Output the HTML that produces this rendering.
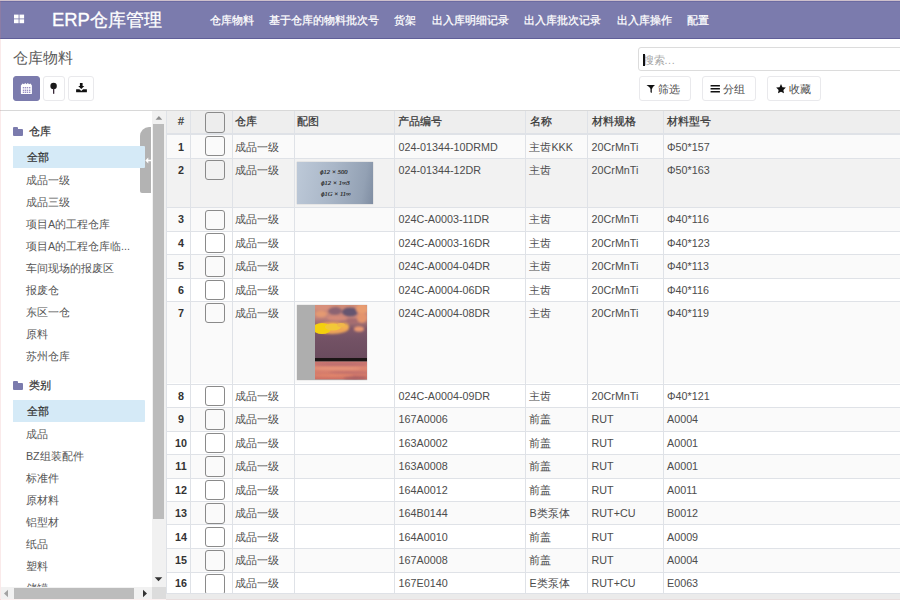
<!DOCTYPE html>
<html><head><meta charset="utf-8">
<style>
*{box-sizing:border-box}
html,body{margin:0;padding:0;width:900px;height:600px;overflow:hidden;background:#fff;font-family:"Liberation Sans",sans-serif;}
body{position:relative}
.abs{position:absolute}
#topline{position:absolute;left:0;top:0;width:900px;height:1px;background:#cdc0cc;z-index:20}
#leftline{position:absolute;left:0;top:1px;width:1px;height:599px;background:rgba(225,130,130,0.17);z-index:20}
#botline{position:absolute;left:0;top:599px;width:900px;height:1px;background:rgba(225,130,130,0.12);z-index:20}
#nav{position:absolute;left:0;top:1px;width:900px;height:38px;background:#7b7bad;border-top:1px solid #6c6ba2;border-bottom:1px solid #5f5e98}
.grid{position:absolute;left:13.8px;top:12.7px;width:10.5px;height:8.6px}
.grid i{position:absolute;width:4.9px;height:3.9px;background:#fff}
.brand{position:absolute;left:52px;top:7.2px;font-size:18.45px;line-height:22px;color:#fff;white-space:nowrap;-webkit-text-stroke:0.3px #fff}
.mi{position:absolute;top:12.8px;font-size:10.75px;line-height:14px;color:#fff;white-space:nowrap;-webkit-text-stroke:0.25px #fff}
.title{position:absolute;left:12.8px;top:47.5px;font-size:14.75px;line-height:20px;color:#5c5c5c;white-space:nowrap}
.vbtn{position:absolute;top:76.25px;height:24.75px;border:1px solid #e9e9ec;border-radius:3px;background:#fff}
.vbtn.act{background:#7b7bad;border-color:#7b7bad}
.search{position:absolute;left:638px;top:47px;width:300px;height:24.3px;border:1px solid #dcdcdc;border-radius:3px;background:#fff}
.caret{position:absolute;left:643px;top:53.6px;width:2.1px;height:12.4px;background:#111;z-index:3}
.ph{position:absolute;left:642.5px;top:53.1px;font-size:10.75px;line-height:14px;color:#a5a5a5;white-space:nowrap}
.fbtn{position:absolute;top:76.3px;height:24.4px;border:1px solid #e9e9ec;border-radius:3px;background:#fff}
.ftxt{position:absolute;top:81.5px;font-size:10.75px;line-height:14px;color:#4c4c4c;white-space:nowrap}
#sep{position:absolute;left:0;top:109.5px;width:900px;height:1.3px;background:#d8d8d8}
/* sidebar */
.fold{position:absolute;left:13.3px;margin-top:0.5px;width:10px;height:7.3px;background:#7b7bad;border-radius:0 1px 1px 1px}
.fold:before{content:"";position:absolute;left:0;top:-1.5px;width:4.5px;height:2px;background:#7b7bad;border-radius:1px 1px 0 0}
.shdr{position:absolute;left:28.6px;font-size:10.75px;line-height:14px;color:#333;font-weight:normal;-webkit-text-stroke:0.22px #333;white-space:nowrap;margin-top:-1.3px}
.ssel{position:absolute;left:13.3px;width:131.6px;background:#d5eaf7;border-radius:0 1px 1px 0}
.sitem{position:absolute;left:25.9px;margin-top:-0.5px;font-size:10.75px;line-height:14px;color:#555;white-space:nowrap}
.sitem.b{color:#333;-webkit-text-stroke:0.22px #333;margin-left:0.7px}
.tab{position:absolute;left:140.3px;top:126.9px;width:11px;height:66.5px;background:#b3b3b3;border-radius:9px 0 0 2px}
.tabarrow{position:absolute;left:145px;top:157.5px;width:7px;height:7px}
.vscroll{position:absolute;left:152.3px;top:110.5px;width:13.4px;height:477px;background:#f1f1f1}
.vthumb{position:absolute;left:153.3px;top:124.3px;width:11px;height:394.5px;background:#bcbcbc}
.hscroll{position:absolute;left:1px;top:587.2px;width:151.3px;height:12px;background:#f1f1f1}
.hthumb{position:absolute;left:14px;top:588.2px;width:120px;height:11px;background:#bcbcbc}
.corner{position:absolute;left:152.3px;top:587.2px;width:13.4px;height:12px;background:#dcdcdc}
/* table */
#tbl{position:absolute;left:166px;top:110.5px;width:734px;height:489px;overflow:hidden}
.thead{position:absolute;left:166px;top:110.5px;width:734px;height:23px;background:#eeeeee}
.row{position:absolute;left:166px;width:734px;border-top:1px solid #dfe2e7}
.vl{position:absolute;top:110.5px;width:1.2px;height:489px;background:#dfe2e7}
.hl{position:absolute;left:166px;width:734px;height:1.4px;background:#dfe2e7}
.th{position:absolute;top:114.3px;font-size:10.75px;line-height:14px;color:#333;-webkit-text-stroke:0.22px #333;white-space:nowrap}
.num{position:absolute;left:171px;width:20px;text-align:center;font-size:10.75px;line-height:14px;color:#333;font-weight:bold}
.cb{position:absolute;left:204.6px;width:20.5px;height:20.45px;border:1.4px solid #8a8a8a;border-radius:3px;background:transparent}
.cell{position:absolute;font-size:10.75px;line-height:14px;color:#4c4c4c;white-space:nowrap}
.img1{position:absolute;left:297px;top:161.7px;width:75.5px;height:42px;background:linear-gradient(100deg,#bdc9d8 0%,#aab7c8 45%,#93a1b4 85%,#7f8da2 100%);overflow:hidden;box-shadow:0 0 1px rgba(0,0,0,.3)}
.img1 span{position:absolute;font-family:"Liberation Serif",serif;font-style:italic;font-size:6.5px;line-height:7px;color:#222;white-space:nowrap;-webkit-text-stroke:0.15px #222}
.img2{position:absolute;left:297px;top:305.3px;width:70px;height:74.4px;background:#aeaeae;overflow:hidden;box-shadow:0 0 1px rgba(0,0,0,.3)}
.sun{position:absolute;left:18px;top:0;width:52px;height:74.4px;
background:
 linear-gradient(180deg,rgba(0,0,0,0) 0%,rgba(0,0,0,0) 72%,#2a1a1e 72%,#2a1a1e 76%,rgba(0,0,0,0) 76%),
 radial-gradient(ellipse 20px 7px at 15px 28px,#f2c230 0%,#eeb43a 60%,rgba(238,160,80,0) 100%),
 radial-gradient(ellipse 14px 6px at 36px 12px,#5e4f66 0%,rgba(94,79,102,0) 100%),
 linear-gradient(180deg,#c98a7e 0%,#b87a78 20%,#8a5f6c 40%,#6e5262 60%,#6b4e5e 71%,#3a2830 72%,#c2706a 78%,#d9807a 88%,#c86c68 100%);}
</style></head><body>
<div id="topline"></div>
<div id="nav">
  <svg style="position:absolute;left:12px;top:12px" width="14" height="12" viewBox="0 0 14 12"><g fill="#fff"><rect x="2" y="0.6" width="4.6" height="3.9"/><rect x="7.5" y="0.6" width="4.6" height="3.9"/><rect x="2" y="5.3" width="4.6" height="3.9"/><rect x="7.5" y="5.3" width="4.6" height="3.9"/></g></svg>
  <div class="brand">ERP仓库管理</div>
</div>
<div id="menu" style="position:absolute;left:0;top:0">
<div class="mi" style="left:209.6px">仓库物料</div>
<div class="mi" style="left:269.4px">基于仓库的物料批次号</div>
<div class="mi" style="left:393.9px">货架</div>
<div class="mi" style="left:432.0px">出入库明细记录</div>
<div class="mi" style="left:524.3px">出入库批次记录</div>
<div class="mi" style="left:616.6px">出入库操作</div>
<div class="mi" style="left:686.9px">配置</div>
</div>
<div id="leftline"></div>
<div class="title">仓库物料</div>
<div class="vbtn act" style="left:13.1px;width:26.9px"></div>
<svg class="abs" style="left:20px;top:82px" width="13" height="13" viewBox="0 0 13 13">
  <path d="M0.9 3.6 L2.6 1.4 L4.0 2.2 L5.3 1.0 L6.5 2.2 L7.8 1.0 L9.1 2.2 L10.5 1.4 L11.9 3.6 L11.9 11.8 Q11.9 12.1 11.6 12.1 L1.2 12.1 Q0.9 12.1 0.9 11.8 Z" fill="#fff"/>
  <g fill="#9a90c2"><rect x="2.80" y="5.00" width="1.4" height="1.4"/><rect x="4.80" y="5.00" width="1.4" height="1.4"/><rect x="6.80" y="5.00" width="1.4" height="1.4"/><rect x="9.00" y="5.00" width="1.4" height="1.4"/><rect x="2.80" y="7.60" width="1.4" height="1.4"/><rect x="4.80" y="7.60" width="1.4" height="1.4"/><rect x="6.80" y="7.60" width="1.4" height="1.4"/><rect x="9.00" y="7.60" width="1.4" height="1.4"/><rect x="2.80" y="9.60" width="1.4" height="1.4"/><rect x="4.80" y="9.60" width="1.4" height="1.4"/><rect x="6.80" y="9.60" width="1.4" height="1.4"/><rect x="9.00" y="9.60" width="1.4" height="1.4"/></g>
</svg>
<div class="vbtn" style="left:42.5px;width:22.3px"></div>
<svg class="abs" style="left:49px;top:82px" width="9" height="13" viewBox="0 0 9 13">
  <circle cx="4.6" cy="4.0" r="3.2" fill="#1a1a1a"/>
  <rect x="4.0" y="6.5" width="1.3" height="5.3" fill="#3a2a3a"/>
</svg>
<div class="vbtn" style="left:68.2px;width:25.6px"></div>
<svg class="abs" style="left:75px;top:82px" width="13" height="12" viewBox="0 0 13 12">
  <path d="M4.9 1.0 H7.6 V4.0 H9.3 L6.25 6.9 L3.2 4.0 H4.9 Z" fill="#111"/>
  <path d="M1.3 7.2 H4.4 L6.25 9.0 L8.1 7.2 H11.6 Q11.9 7.2 11.9 7.6 V9.9 Q11.9 10.3 11.5 10.3 H1.5 Q1.1 10.3 1.1 9.9 V7.6 Q1.1 7.2 1.3 7.2 Z" fill="#111"/>
</svg>
<div class="search"></div>
<div class="caret"></div>
<div class="ph">搜索<span style="letter-spacing:0.62px">...</span></div>
<div class="fbtn" style="left:638.5px;width:52px"></div>
<svg class="abs" style="left:646px;top:84px" width="10" height="10" viewBox="0 0 10 10">
  <path d="M0.5 1 L9 1 Q6 3.4 5.8 5.2 L5.8 9 L4.5 8.2 L4.5 5.2 Q4.3 3.4 0.5 1 Z" fill="#111"/>
</svg>
<div class="ftxt" style="left:657.6px">筛选</div>
<div class="fbtn" style="left:702.2px;width:53.5px"></div>
<svg class="abs" style="left:710px;top:84px" width="11" height="9" viewBox="0 0 11 9">
  <rect x="0.5" y="0.9" width="9.5" height="1.5" rx="0.5" fill="#111"/><rect x="0.5" y="3.95" width="9.5" height="1.5" rx="0.5" fill="#111"/><rect x="0.5" y="7.0" width="9.5" height="1.5" rx="0.5" fill="#111"/>
</svg>
<div class="ftxt" style="left:723.2px">分组</div>
<div class="fbtn" style="left:767.3px;width:53.4px"></div>
<svg class="abs" style="left:775.5px;top:83.5px" width="10" height="10" viewBox="0 0 10 10">
  <path d="M5.00 0.10 L6.47 3.18 L9.85 3.62 L7.38 5.97 L8.00 9.33 L5.00 7.70 L2.00 9.33 L2.62 5.97 L0.15 3.62 L3.53 3.18Z" fill="#111"/>
</svg>
<div class="ftxt" style="left:788.6px">收藏</div>
<div id="sep"></div>

<!-- table -->
<div class="thead"></div>
<div class="row" style="top:133.5px;height:24.80000000000001px;background:#fafafa"></div>
<div class="num" style="top:139.70000000000002px">1</div>
<div class="cb" style="top:135.8px"></div>
<div class="cell" style="left:235.3px;top:139.70000000000002px">成品一级</div>
<div class="cell" style="left:398.6px;top:139.70000000000002px">024-01344-10DRMD</div>
<div class="cell" style="left:529.4px;top:139.70000000000002px">主齿KKK</div>
<div class="cell" style="left:591.6px;top:139.70000000000002px">20CrMnTi</div>
<div class="cell" style="left:667px;top:139.70000000000002px">Φ50*157</div>
<div class="row" style="top:158.3px;height:48.89999999999998px;background:#f2f2f2"></div>
<div class="num" style="top:163.10000000000002px">2</div>
<div class="cb" style="top:159.60000000000002px"></div>
<div class="cell" style="left:235.3px;top:163.10000000000002px">成品一级</div>
<div class="cell" style="left:398.6px;top:163.10000000000002px">024-01344-12DR</div>
<div class="cell" style="left:529.4px;top:163.10000000000002px">主齿</div>
<div class="cell" style="left:591.6px;top:163.10000000000002px">20CrMnTi</div>
<div class="cell" style="left:667px;top:163.10000000000002px">Φ50*163</div>
<div class="img1"><span style="top:6.5px;left:23px">ɸ12 × 500</span><span style="top:17.5px;left:24px">ɸ12 × 1∞3</span><span style="top:28.5px;left:24px">ɸ1G × 11∞</span></div>
<div class="row" style="top:207.2px;height:23.400000000000006px;background:#fafafa"></div>
<div class="num" style="top:212.2px">3</div>
<div class="cb" style="top:209.5px"></div>
<div class="cell" style="left:235.3px;top:212.2px">成品一级</div>
<div class="cell" style="left:398.6px;top:212.2px">024C-A0003-11DR</div>
<div class="cell" style="left:529.4px;top:212.2px">主齿</div>
<div class="cell" style="left:591.6px;top:212.2px">20CrMnTi</div>
<div class="cell" style="left:667px;top:212.2px">Φ40*116</div>
<div class="row" style="top:230.6px;height:23.400000000000006px;background:#ffffff"></div>
<div class="num" style="top:235.6px">4</div>
<div class="cb" style="top:232.9px"></div>
<div class="cell" style="left:235.3px;top:235.6px">成品一级</div>
<div class="cell" style="left:398.6px;top:235.6px">024C-A0003-16DR</div>
<div class="cell" style="left:529.4px;top:235.6px">主齿</div>
<div class="cell" style="left:591.6px;top:235.6px">20CrMnTi</div>
<div class="cell" style="left:667px;top:235.6px">Φ40*123</div>
<div class="row" style="top:254.0px;height:23.5px;background:#fafafa"></div>
<div class="num" style="top:259.05px">5</div>
<div class="cb" style="top:256.3px"></div>
<div class="cell" style="left:235.3px;top:259.05px">成品一级</div>
<div class="cell" style="left:398.6px;top:259.05px">024C-A0004-04DR</div>
<div class="cell" style="left:529.4px;top:259.05px">主齿</div>
<div class="cell" style="left:591.6px;top:259.05px">20CrMnTi</div>
<div class="cell" style="left:667px;top:259.05px">Φ40*113</div>
<div class="row" style="top:277.5px;height:23.80000000000001px;background:#ffffff"></div>
<div class="num" style="top:282.7px">6</div>
<div class="cb" style="top:279.8px"></div>
<div class="cell" style="left:235.3px;top:282.7px">成品一级</div>
<div class="cell" style="left:398.6px;top:282.7px">024C-A0004-06DR</div>
<div class="cell" style="left:529.4px;top:282.7px">主齿</div>
<div class="cell" style="left:591.6px;top:282.7px">20CrMnTi</div>
<div class="cell" style="left:667px;top:282.7px">Φ40*116</div>
<div class="row" style="top:301.3px;height:82.19999999999999px;background:#fafafa"></div>
<div class="num" style="top:306.1px">7</div>
<div class="cb" style="top:302.6px"></div>
<div class="cell" style="left:235.3px;top:306.1px">成品一级</div>
<div class="cell" style="left:398.6px;top:306.1px">024C-A0004-08DR</div>
<div class="cell" style="left:529.4px;top:306.1px">主齿</div>
<div class="cell" style="left:591.6px;top:306.1px">20CrMnTi</div>
<div class="cell" style="left:667px;top:306.1px">Φ40*119</div>
<div class="img2"><svg style="position:absolute;left:18px;top:0" width="52" height="74.4" viewBox="0 0 52 74.4">
<defs><filter id="bl" x="-30%" y="-30%" width="160%" height="160%"><feGaussianBlur stdDeviation="0.9"/></filter>
<filter id="bl2" x="-30%" y="-30%" width="160%" height="160%"><feGaussianBlur stdDeviation="0.5"/></filter>
<linearGradient id="sky" x1="0" y1="0" x2="0" y2="1">
<stop offset="0" stop-color="#d28c76"/><stop offset="0.22" stop-color="#c4847a"/><stop offset="0.42" stop-color="#80596a"/><stop offset="0.6" stop-color="#735265"/><stop offset="1" stop-color="#6a4b5d"/></linearGradient>
<linearGradient id="sea" x1="0" y1="0" x2="0" y2="1">
<stop offset="0" stop-color="#c87470"/><stop offset="0.35" stop-color="#dc8672"/><stop offset="1" stop-color="#cc7064"/></linearGradient>
</defs>
<rect x="0" y="0" width="52" height="56" fill="url(#sky)"/>
<g filter="url(#bl)">
<ellipse cx="8" cy="2" rx="12" ry="3" fill="#d8907c"/>
<ellipse cx="6" cy="9" rx="6" ry="3.2" fill="#e49a72"/>
<ellipse cx="20" cy="6" rx="7" ry="4" fill="#8c6472"/>
<ellipse cx="35" cy="7" rx="8" ry="4.5" fill="#655470"/>
<ellipse cx="47" cy="4" rx="6" ry="5" fill="#e89c70"/>
<ellipse cx="47" cy="13" rx="5" ry="5" fill="#e4946c"/>
<ellipse cx="22" cy="13" rx="10" ry="2.6" fill="#d48a78"/>
<ellipse cx="37" cy="16" rx="6" ry="2.5" fill="#a56c70"/>
<ellipse cx="17" cy="23" rx="17" ry="6" fill="#eea458"/>
<ellipse cx="29" cy="21" rx="5" ry="3" fill="#f0b050"/>
<ellipse cx="44" cy="24" rx="5" ry="2.8" fill="#eb9a72"/>
</g>
<g filter="url(#bl2)">
<ellipse cx="7" cy="23.5" rx="9" ry="5.5" fill="#f4d010"/>
<ellipse cx="18" cy="22" rx="8" ry="3.5" fill="#f2c838"/>
<ellipse cx="26" cy="20" rx="4" ry="2" fill="#f0b848"/>
</g>
<rect x="0" y="53.0" width="52" height="3.6" fill="#1e1418" filter="url(#bl2)"/>
<rect x="0" y="56.6" width="52" height="17.8" fill="url(#sea)"/>
<g filter="url(#bl)" opacity="0.85">
<ellipse cx="26" cy="59.5" rx="26" ry="1.0" fill="#b06670"/>
<ellipse cx="22" cy="63.5" rx="24" ry="1.3" fill="#e8987c"/>
<ellipse cx="34" cy="67.5" rx="20" ry="1.1" fill="#b86a6c"/>
<ellipse cx="18" cy="70.5" rx="20" ry="1.4" fill="#e4886c"/>
<ellipse cx="40" cy="73" rx="12" ry="1.5" fill="#9c5a64"/>
</g>
</svg></div>
<div class="row" style="top:383.5px;height:23.5px;background:#ffffff"></div>
<div class="num" style="top:388.55px">8</div>
<div class="cb" style="top:385.8px"></div>
<div class="cell" style="left:235.3px;top:388.55px">成品一级</div>
<div class="cell" style="left:398.6px;top:388.55px">024C-A0004-09DR</div>
<div class="cell" style="left:529.4px;top:388.55px">主齿</div>
<div class="cell" style="left:591.6px;top:388.55px">20CrMnTi</div>
<div class="cell" style="left:667px;top:388.55px">Φ40*121</div>
<div class="row" style="top:407.0px;height:23.600000000000023px;background:#fafafa"></div>
<div class="num" style="top:412.1px">9</div>
<div class="cb" style="top:409.3px"></div>
<div class="cell" style="left:235.3px;top:412.1px">成品一级</div>
<div class="cell" style="left:398.6px;top:412.1px">167A0006</div>
<div class="cell" style="left:529.4px;top:412.1px">前盖</div>
<div class="cell" style="left:591.6px;top:412.1px">RUT</div>
<div class="cell" style="left:667px;top:412.1px">A0004</div>
<div class="row" style="top:430.6px;height:23.399999999999977px;background:#ffffff"></div>
<div class="num" style="top:435.6px">10</div>
<div class="cb" style="top:432.90000000000003px"></div>
<div class="cell" style="left:235.3px;top:435.6px">成品一级</div>
<div class="cell" style="left:398.6px;top:435.6px">163A0002</div>
<div class="cell" style="left:529.4px;top:435.6px">前盖</div>
<div class="cell" style="left:591.6px;top:435.6px">RUT</div>
<div class="cell" style="left:667px;top:435.6px">A0001</div>
<div class="row" style="top:454.0px;height:23.5px;background:#fafafa"></div>
<div class="num" style="top:459.05px">11</div>
<div class="cb" style="top:456.3px"></div>
<div class="cell" style="left:235.3px;top:459.05px">成品一级</div>
<div class="cell" style="left:398.6px;top:459.05px">163A0008</div>
<div class="cell" style="left:529.4px;top:459.05px">前盖</div>
<div class="cell" style="left:591.6px;top:459.05px">RUT</div>
<div class="cell" style="left:667px;top:459.05px">A0001</div>
<div class="row" style="top:477.5px;height:23.399999999999977px;background:#ffffff"></div>
<div class="num" style="top:482.5px">12</div>
<div class="cb" style="top:479.8px"></div>
<div class="cell" style="left:235.3px;top:482.5px">成品一级</div>
<div class="cell" style="left:398.6px;top:482.5px">164A0012</div>
<div class="cell" style="left:529.4px;top:482.5px">前盖</div>
<div class="cell" style="left:591.6px;top:482.5px">RUT</div>
<div class="cell" style="left:667px;top:482.5px">A0011</div>
<div class="row" style="top:500.9px;height:23.5px;background:#fafafa"></div>
<div class="num" style="top:505.94999999999993px">13</div>
<div class="cb" style="top:503.2px"></div>
<div class="cell" style="left:235.3px;top:505.94999999999993px">成品一级</div>
<div class="cell" style="left:398.6px;top:505.94999999999993px">164B0144</div>
<div class="cell" style="left:529.4px;top:505.94999999999993px">B类泵体</div>
<div class="cell" style="left:591.6px;top:505.94999999999993px">RUT+CU</div>
<div class="cell" style="left:667px;top:505.94999999999993px">B0012</div>
<div class="row" style="top:524.4px;height:23.700000000000045px;background:#ffffff"></div>
<div class="num" style="top:529.55px">14</div>
<div class="cb" style="top:526.6999999999999px"></div>
<div class="cell" style="left:235.3px;top:529.55px">成品一级</div>
<div class="cell" style="left:398.6px;top:529.55px">164A0010</div>
<div class="cell" style="left:529.4px;top:529.55px">前盖</div>
<div class="cell" style="left:591.6px;top:529.55px">RUT</div>
<div class="cell" style="left:667px;top:529.55px">A0009</div>
<div class="row" style="top:548.1px;height:23.699999999999932px;background:#fafafa"></div>
<div class="num" style="top:553.25px">15</div>
<div class="cb" style="top:550.4px"></div>
<div class="cell" style="left:235.3px;top:553.25px">成品一级</div>
<div class="cell" style="left:398.6px;top:553.25px">167A0008</div>
<div class="cell" style="left:529.4px;top:553.25px">前盖</div>
<div class="cell" style="left:591.6px;top:553.25px">RUT</div>
<div class="cell" style="left:667px;top:553.25px">A0004</div>
<div class="row" style="top:571.8px;height:21.600000000000023px;background:#ffffff"></div>
<div class="num" style="top:575.9px">16</div>
<div class="cb" style="top:574.0999999999999px"></div>
<div class="cell" style="left:235.3px;top:575.9px">成品一级</div>
<div class="cell" style="left:398.6px;top:575.9px">167E0140</div>
<div class="cell" style="left:529.4px;top:575.9px">E类泵体</div>
<div class="cell" style="left:591.6px;top:575.9px">RUT+CU</div>
<div class="cell" style="left:667px;top:575.9px">E0063</div>
<div class="row" style="top:593.4px;height:23.600000000000023px;background:#ebebeb;z-index:2"></div>
<div class="vl" style="left:165.5px"></div>
<div class="vl" style="left:190.3px"></div>
<div class="vl" style="left:231.5px"></div>
<div class="vl" style="left:293.5px"></div>
<div class="vl" style="left:394.0px"></div>
<div class="vl" style="left:524.7px"></div>
<div class="vl" style="left:587.1px"></div>
<div class="vl" style="left:663.2px"></div>
<div class="hl" style="top:132.8px"></div>
<div class="th" style="left:178px">#</div>
<div class="cb" style="left:204.6px;top:112.2px;background:#ededed"></div>
<div class="th" style="left:235.3px">仓库</div>
<div class="th" style="left:297.3px">配图</div>
<div class="th" style="left:398px">产品编号</div>
<div class="th" style="left:529.5px">名称</div>
<div class="th" style="left:591.5px">材料规格</div>
<div class="th" style="left:667px">材料型号</div>

<!-- sidebar -->
<div id="side" style="position:absolute;left:1px;top:110.5px;width:151.3px;height:476.7px;overflow:hidden;background:#fff"></div>
<div class="tab"></div>
<div class="fold" style="top:128px"></div><div class="shdr" style="top:125px">仓库</div>
<div class="ssel" style="top:146.2px;height:21.80000000000001px"></div><div class="sitem b" style="top:150.1px">全部</div>
<div class="sitem" style="top:173px">成品一级</div>
<div class="sitem" style="top:195px">成品三级</div>
<div class="sitem" style="top:217px">项目A的工程仓库</div>
<div class="sitem" style="top:239px">项目A的工程仓库临...</div>
<div class="sitem" style="top:261px">车间现场的报废区</div>
<div class="sitem" style="top:283px">报废仓</div>
<div class="sitem" style="top:305px">东区一仓</div>
<div class="sitem" style="top:327px">原料</div>
<div class="sitem" style="top:349px">苏州仓库</div>
<div class="fold" style="top:382px"></div><div class="shdr" style="top:379px">类别</div>
<div class="ssel" style="top:400.1px;height:21.899999999999977px"></div><div class="sitem b" style="top:404.05px">全部</div>
<div class="sitem" style="top:427px">成品</div>
<div class="sitem" style="top:449px">BZ组装配件</div>
<div class="sitem" style="top:471px">标准件</div>
<div class="sitem" style="top:493px">原材料</div>
<div class="sitem" style="top:515px">铝型材</div>
<div class="sitem" style="top:537px">纸品</div>
<div class="sitem" style="top:559px">塑料</div>
<div class="sitem" style="top:581px">储罐</div>
<svg class="abs" style="left:144.5px;top:157.3px" width="8" height="7" viewBox="0 0 8 7"><path d="M0.3 3.5l3-3v2.3h4.5v1.4h-4.5v2.3z" fill="#fff"/></svg>
<div class="vscroll"></div>
<div class="vthumb"></div>
<svg class="abs" style="left:154px;top:115px" width="9" height="6" viewBox="0 0 9 6"><path d="M4.9 1.1l3.3 3.6h-6.6z" fill="#8f8f8f"/></svg>
<svg class="abs" style="left:154px;top:575.6px" width="9" height="6" viewBox="0 0 9 6"><path d="M4.5 5.2l3.8-4h-7.6z" fill="#333"/></svg>
<div class="hscroll"></div>
<div class="hthumb"></div>
<svg class="abs" style="left:3px;top:589px" width="6" height="9" viewBox="0 0 6 9"><path d="M1 4.5l4-3.8v7.6z" fill="#a3a3a3"/></svg>
<svg class="abs" style="left:142px;top:589px" width="6" height="9" viewBox="0 0 6 9"><path d="M5 4.5l-4-3.8v7.6z" fill="#333"/></svg>
<div class="corner"></div>
<div id="botline"></div>
</body></html>
